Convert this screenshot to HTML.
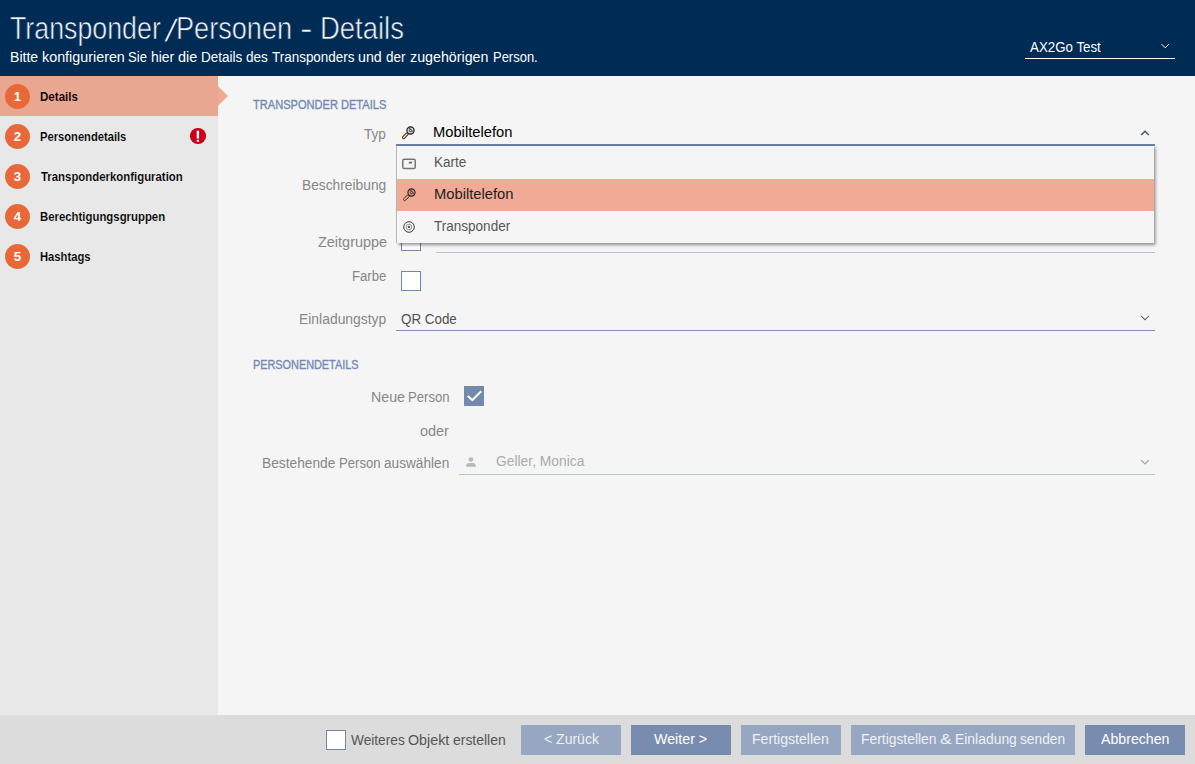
<!DOCTYPE html>
<html lang="de">
<head>
<meta charset="utf-8">
<title>Transponder/Personen - Details</title>
<style>
*{box-sizing:border-box;margin:0;padding:0}
html,body{width:1195px;height:764px;overflow:hidden}
body{position:relative;background:#f5f5f5;font-family:"Liberation Sans",sans-serif;font-size:14.2px;color:#111}
.abs{position:absolute}
.t{position:absolute;white-space:nowrap;z-index:5;line-height:20px;transform-origin:0 0}
.w{position:absolute;top:0;white-space:nowrap;transform-origin:0 0}
#header{position:absolute;left:0;top:0;width:1195px;height:76px;background:#002b55}
#projline{position:absolute;left:1025px;top:57.5px;width:150px;height:1.5px;background:#fff}
#sidebar{position:absolute;left:0;top:76px;width:218px;height:639px;background:#e8e8e8}
.step{position:absolute;left:0;width:218px;height:40px}
.step.active{background:#e9a690}
.num{position:absolute;left:5px;top:8px;width:25px;height:25px;border-radius:50%;background:#e8683a;color:#fff;font-weight:bold;font-size:13.3px;line-height:26px;text-align:center}
#arrow{position:absolute;left:218px;top:86px;width:0;height:0;border-top:10px solid transparent;border-bottom:10px solid transparent;border-left:10px solid #eeaa93}
#err{position:absolute;left:190.05px;top:128.4px;width:15.7px;height:15.7px;border-radius:50%;background:#c9001c}
#footer{position:absolute;left:0;top:715px;width:1195px;height:49px;background:#dcdcdc}
.btn{position:absolute;top:10px;height:30px;background:#788cb0}
.btn.dis{background:#97a6c1}
.cb{position:absolute;width:20px;height:20px;background:#fff;border:1px solid #7387ad}
</style>
</head>
<body>
<div id="header">
  <div id="projline"></div>
  <svg class="abs" style="left:1160px;top:42px" width="10" height="8" viewBox="0 0 10 8"><path d="M1.6 2.2 L5.2 5.8 L8.8 2.2" fill="none" stroke="#fff" stroke-width="1"/></svg>
</div>

<div id="sidebar">
  <div class="step active" style="top:0"><div class="num">1</div></div>
  <div class="step" style="top:40px"><div class="num">2</div></div>
  <div class="step" style="top:80px"><div class="num">3</div></div>
  <div class="step" style="top:120px"><div class="num">4</div></div>
  <div class="step" style="top:160px"><div class="num">5</div></div>
</div>
<div id="arrow"></div>
<div id="err"><svg width="15.7" height="15.7" viewBox="0 0 15.7 15.7" style="display:block"><rect x="6.7" y="2.7" width="2.4" height="7.8" fill="#fff"/><rect x="6.7" y="11.8" width="2.4" height="1.9" fill="#fff"/></svg></div>

<div id="main">
  <!-- combo Typ -->
  <div class="abs" style="left:396px;top:144px;width:759px;height:2px;background:#6d82aa"></div>
  <svg class="abs" style="left:399.5px;top:125px" width="16" height="16" viewBox="0 0 16 16"><g fill="none" stroke="#1a1a1a" stroke-width="1.15"><circle cx="10.5" cy="5.5" r="3.6" fill="rgba(0,0,0,0.13)"/><path d="M8.7 3.7 C10.6 3.5 12.4 5.2 12.2 7.2 M8.9 5.7 C9.8 5.6 10.4 6.2 10.3 7.2" stroke-width="1"/><rect x="-1.15" y="0" width="2.3" height="7.2" rx="1.1" transform="translate(7.9 8.1) rotate(44)" stroke="#4a2a10" stroke-width="1"/></g></svg>
  <svg class="abs" style="left:1140px;top:129px" width="10" height="8" viewBox="0 0 10 8"><path d="M1.2 6 L5 2.3 L8.8 6" fill="none" stroke="#3a527f" stroke-width="1.4"/></svg>

  <div class="cb" style="left:401px;top:231px"></div>
  <div class="abs" style="left:436px;top:251.5px;width:719px;height:1px;background:#b4c0d6"></div>

  <div class="cb" style="left:401px;top:271px"></div>

  <div class="abs" style="left:396px;top:329.5px;width:759px;height:1.5px;background:#7f92b6"></div>
  <svg class="abs" style="left:1140px;top:314.2px" width="10" height="8" viewBox="0 0 10 8"><path d="M1.2 2 L5 5.8 L8.8 2" fill="none" stroke="#505050" stroke-width="1.05"/></svg>

  <!-- popup -->
  <div id="popup" style="position:absolute;left:397px;top:146px;width:757px;height:97px;background:#f5f5f5;box-shadow:1px 1.5px 3px 0.5px rgba(0,0,0,.42), -1px 0 0 0 #bdbdbd">
    <div style="position:absolute;left:0;top:33px;width:757px;height:32px;background:#f0aa96"></div>
    <svg class="abs" style="left:4px;top:10.5px" width="16" height="14" viewBox="0 0 16 14"><rect x="1.75" y="2.15" width="12.5" height="9.4" rx="1.6" fill="none" stroke="#757575" stroke-width="1.5"/><rect x="7.8" y="5.1" width="3.2" height="1.3" fill="#555"/><rect x="8.3" y="4.2" width="3.4" height="0.8" fill="#bbb"/></svg>
    <svg class="abs" style="left:3.6px;top:40.7px" width="16" height="16" viewBox="0 0 16 16"><g fill="none" stroke="#2a2220" stroke-width="1.1"><circle cx="10.5" cy="5.5" r="3.6" fill="rgba(0,0,0,0.13)"/><path d="M8.7 3.7 C10.6 3.5 12.4 5.2 12.2 7.2 M8.9 5.7 C9.8 5.6 10.4 6.2 10.3 7.2" stroke-width="1"/><rect x="-1.15" y="0" width="2.3" height="7.2" rx="1.1" transform="translate(7.9 8.1) rotate(44)" stroke="#2a2220" stroke-width="0.9"/></g></svg>
    <svg class="abs" style="left:5px;top:73.9px" width="14" height="14" viewBox="0 0 14 14"><circle cx="7" cy="7" r="5.3" fill="none" stroke="#3a3a3a" stroke-width="1"/><circle cx="7" cy="7" r="2.8" fill="none" stroke="#777" stroke-width="0.8"/><circle cx="7" cy="7" r="1.1" fill="#333"/></svg>
  </div>

  <div class="abs" style="left:464px;top:386px;width:20px;height:20px;background:#7589af"><svg width="20" height="20" viewBox="0 0 20 20" style="display:block"><path d="M3.8 9.9 L8.3 14.1 L17.2 5.2" fill="none" stroke="#fff" stroke-width="2"/></svg></div>
  <svg class="abs" style="left:465px;top:456px" width="12" height="12" viewBox="0 0 12 12"><circle cx="6" cy="3.5" r="2.35" fill="#b8b8b8"/><path d="M1.1 10.8 L1.1 9.4 Q1.5 7.1 4.2 7.1 L7.8 7.1 Q10.5 7.1 10.9 9.4 L10.9 10.8 Z" fill="#b8b8b8"/></svg>
  <div class="abs" style="left:459px;top:474px;width:696px;height:1px;background:#b9c3d8"></div>
  <svg class="abs" style="left:1140px;top:458px" width="10" height="8" viewBox="0 0 10 8"><path d="M1.2 2.2 L5 5.9 L8.8 2.2" fill="none" stroke="#a2a2a2" stroke-width="1.2"/></svg>
</div>

<div id="footer">
  <div class="cb" style="left:326px;top:15px"></div>
  <div class="btn dis" style="left:521px;width:100px"></div>
  <div class="btn" style="left:631px;width:100px"></div>
  <div class="btn dis" style="left:741px;width:100px"></div>
  <div class="btn dis" style="left:851px;width:224px"></div>
  <div class="btn" style="left:1085px;width:100px"></div>
</div>
<div class="t" id="title" style="left:0;top:19px;font-size:31px;color:#f2f4f7;-webkit-text-stroke:0.6px #002b55;"><span class="w" id="title_0" style="left:9.89px;transform:scaleX(0.8636)">Transponder</span><span class="w" id="title_1" style="left:162.58px;font-size:33px;top:1.5px;-webkit-text-stroke:1.25px #002b55;transform:scaleX(1.7642)">/</span><span class="w" id="title_2" style="left:175.95px;transform:scaleX(0.8749)">Personen</span> <span class="w" id="title_3" style="left:300.29px;transform:scaleX(1.2118)">-</span> <span class="w" id="title_4" style="left:320.15px;transform:scaleX(0.8855)">Details</span></div>
<div class="t" id="subtitle" style="left:0;top:48px;font-size:13.8px;color:#ffffff;"><span class="w" id="subtitle_0" style="left:9.96px;transform:scaleX(1.0204)">Bitte</span> <span class="w" id="subtitle_1" style="left:41.66px;transform:scaleX(1.0386)">konfigurieren</span> <span class="w" id="subtitle_2" style="left:128.11px;transform:scaleX(0.9482)">Sie</span> <span class="w" id="subtitle_3" style="left:150.53px;transform:scaleX(1.0095)">hier</span> <span class="w" id="subtitle_4" style="left:178.29px;transform:scaleX(1.0476)">die</span> <span class="w" id="subtitle_5" style="left:200.67px;transform:scaleX(0.9806)">Details</span> <span class="w" id="subtitle_6" style="left:245.87px;transform:scaleX(0.9826)">des</span> <span class="w" id="subtitle_7" style="left:271.90px;transform:scaleX(0.9747)">Transponders</span> <span class="w" id="subtitle_8" style="left:358.11px;transform:scaleX(1.0279)">und</span> <span class="w" id="subtitle_9" style="left:385.75px;transform:scaleX(0.9753)">der</span> <span class="w" id="subtitle_10" style="left:410.11px;transform:scaleX(1.0333)">zugehörigen</span> <span class="w" id="subtitle_11" style="left:492.94px;transform:scaleX(0.9403)">Person.</span></div>
<div class="t" id="projtxt" style="left:1029.63px;top:38px;font-size:13.8px;color:#ffffff;transform:scaleX(0.9651)">AX2Go Test</div>
<div class="t" id="s1" style="left:40.04px;top:87px;font-size:12.4px;color:#000000;font-weight:bold;-webkit-text-stroke:0.12px #e9a690;transform:scaleX(0.9346)">Details</div>
<div class="t" id="s2" style="left:39.70px;top:127px;font-size:12.4px;color:#000000;font-weight:bold;-webkit-text-stroke:0.12px #e8e8e8;transform:scaleX(0.9020)">Personendetails</div>
<div class="t" id="s3" style="left:40.64px;top:167px;font-size:12.4px;color:#000000;font-weight:bold;-webkit-text-stroke:0.12px #e8e8e8;transform:scaleX(0.9191)">Transponderkonfiguration</div>
<div class="t" id="s4" style="left:39.67px;top:207px;font-size:12.4px;color:#000000;font-weight:bold;-webkit-text-stroke:0.12px #e8e8e8;transform:scaleX(0.9180)">Berechtigungsgruppen</div>
<div class="t" id="s5" style="left:39.83px;top:247px;font-size:12.4px;color:#000000;font-weight:bold;-webkit-text-stroke:0.12px #e8e8e8;transform:scaleX(0.9067)">Hashtags</div>
<div class="t" id="sec1" style="left:252.82px;top:95px;font-size:12.5px;color:#7389b4;-webkit-text-stroke:0.35px #7389b4;transform:scaleX(0.8858)">TRANSPONDER DETAILS</div>
<div class="t" id="ltyp" style="left:363.83px;top:125px;font-size:13.8px;color:#878787;transform:scaleX(0.9836)">Typ</div>
<div class="t" id="vtyp" style="left:433.27px;top:123px;font-size:13.8px;color:#000000;transform:scaleX(1.0665)">Mobiltelefon</div>
<div class="t" id="lbes" style="left:301.74px;top:176px;font-size:13.8px;color:#878787;transform:scaleX(0.9980)">Beschreibung</div>
<div class="t" id="lzeit" style="left:317.83px;top:233px;font-size:13.8px;color:#878787;transform:scaleX(1.0474)">Zeitgruppe</div>
<div class="t" id="lfarbe" style="left:352.04px;top:267px;font-size:13.8px;color:#878787;transform:scaleX(0.9510)">Farbe</div>
<div class="t" id="leinl" style="left:298.54px;top:310px;font-size:13.8px;color:#878787;transform:scaleX(1.0072)">Einladungstyp</div>
<div class="t" id="veinl" style="left:400.67px;top:310px;font-size:13.8px;color:#505050;transform:scaleX(0.9701)">QR Code</div>
<div class="t" id="p1" style="left:434.14px;top:153px;font-size:13.8px;color:#555555;transform:scaleX(0.9783)">Karte</div>
<div class="t" id="p2" style="left:433.50px;top:185px;font-size:13.8px;color:#1e1e1e;transform:scaleX(1.0683)">Mobiltelefon</div>
<div class="t" id="p3" style="left:434.11px;top:217px;font-size:13.8px;color:#555555;transform:scaleX(0.9805)">Transponder</div>
<div class="t" id="sec2" style="left:252.94px;top:355px;font-size:12.5px;color:#7389b4;-webkit-text-stroke:0.35px #7389b4;transform:scaleX(0.8694)">PERSONENDETAILS</div>
<div class="t" id="lneu" style="left:0;top:388px;font-size:13.8px;color:#878787;"><span class="w" id="lneu_0" style="left:370.74px;transform:scaleX(1.0285)">Neue</span> <span class="w" id="lneu_1" style="left:408.40px;transform:scaleX(0.9500)">Person</span></div>
<div class="t" id="loder" style="left:420.06px;top:422px;font-size:13.8px;color:#878787;transform:scaleX(1.0469)">oder</div>
<div class="t" id="lbest" style="left:0;top:454px;font-size:13.8px;color:#878787;"><span class="w" id="lbest_0" style="left:262.41px;transform:scaleX(0.9956)">Bestehende</span> <span class="w" id="lbest_1" style="left:339.02px;transform:scaleX(0.9515)">Person</span> <span class="w" id="lbest_2" style="left:383.76px;transform:scaleX(0.9896)">auswählen</span></div>
<div class="t" id="vbest" style="left:495.97px;top:452px;font-size:13.8px;color:#ababab;transform:scaleX(1.0030)">Geller, Monica</div>
<div class="t" id="fcb" style="left:0;top:731px;font-size:13.8px;color:#555555;"><span class="w" id="fcb_0" style="left:350.76px;transform:scaleX(0.9917)">Weiteres</span> <span class="w" id="fcb_1" style="left:407.77px;transform:scaleX(1.0338)">Objekt</span> <span class="w" id="fcb_2" style="left:453.44px;transform:scaleX(1.0107)">erstellen</span></div>
<div class="t" id="b1" style="left:543.96px;top:730px;font-size:13.8px;color:#eef1f6;transform:scaleX(1.0156)">&lt; Zurück</div>
<div class="t" id="b2" style="left:653.80px;top:730px;font-size:13.8px;color:#ffffff;transform:scaleX(1.0328)">Weiter &gt;</div>
<div class="t" id="b3" style="left:752.03px;top:730px;font-size:13.8px;color:#eef1f6;transform:scaleX(1.0215)">Fertigstellen</div>
<div class="t" id="b4" style="left:0;top:730px;font-size:13.8px;color:#eef1f6;"><span class="w" id="b4_0" style="left:861.03px;transform:scaleX(1.0044)">Fertigstellen</span> <span class="w" id="b4_1" style="left:940.12px;transform:scaleX(1.2663)">&amp;</span> <span class="w" id="b4_2" style="left:955.03px;transform:scaleX(1.0078)">Einladung</span> <span class="w" id="b4_3" style="left:1020.12px;transform:scaleX(0.9947)">senden</span></div>
<div class="t" id="b5" style="left:1101.06px;top:730px;font-size:13.8px;color:#ffffff;transform:scaleX(1.0259)">Abbrechen</div>
</body>
</html>
